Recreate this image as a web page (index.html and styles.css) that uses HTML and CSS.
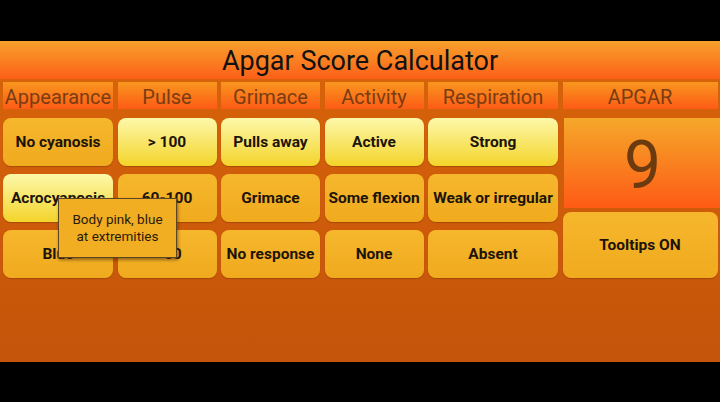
FILE: index.html
```html
<!DOCTYPE html>
<html>
<head>
<meta charset="utf-8">
<link rel="stylesheet" href="styles.css">
</head>
<body>
<div class="app">
  <div class="title">Apgar Score Calculator</div>
  <div class="grid">
    <div class="hdr">Appearance</div>
    <div class="hdr">Pulse</div>
    <div class="hdr">Grimace</div>
    <div class="hdr">Activity</div>
    <div class="hdr">Respiration</div>
    <div class="hdr">APGAR</div>

    <div class="btn">No cyanosis</div>
    <div class="btn sel">&gt; 100</div>
    <div class="btn sel">Pulls away</div>
    <div class="btn sel">Active</div>
    <div class="btn sel">Strong</div>
    <div class="side">
      <div class="score">9</div>
      <div class="btn toggle">Tooltips ON</div>
    </div>

    <div class="btn sel">Acrocyanosis</div>
    <div class="btn">60-100</div>
    <div class="btn">Grimace</div>
    <div class="btn">Some flexion</div>
    <div class="btn">Weak or irregular</div>

    <div class="btn">Blue</div>
    <div class="btn">&lt; 60</div>
    <div class="btn">No response</div>
    <div class="btn">None</div>
    <div class="btn">Absent</div>
  </div>
  <div class="tooltip">Body pink, blue<br>at extremities</div>
</div>
</body>
</html>
```
FILE: styles.css
```css
html, body {
  margin: 0;
  padding: 0;
  background: #000;
  width: 720px;
  height: 402px;
  overflow: hidden;
  font-family: Roboto, "Liberation Sans", sans-serif;
}
.app {
  position: relative;
  margin-top: 41px;
  height: 321px;
  background: linear-gradient(#d9640a, #c4540a);
}
.title {
  height: 38px;
  line-height: 40px;
  text-align: center;
  font-size: 27px;
  color: #111;
  background: linear-gradient(#f6a02c 0%, #fb7a20 60%, #fd5e18 100%);
}
.grid {
  display: grid;
  grid-template-columns: 110px 99px 99px 99px 130px 155px;
  grid-template-rows: 28px 48px 48px 48px;
  column-gap: 4.5px;
  row-gap: 8px;
  padding: 3px 0 0 3px;
}
.hdr {
  display: flex;
  align-items: center;
  justify-content: center;
  padding-top: 2px;
  font-size: 20px;
  color: #7a3c12;
  background: linear-gradient(#f8961f, #fe5b15);
  margin-bottom: 1px;
}
.btn {
  display: flex;
  align-items: center;
  justify-content: center;
  border-radius: 8px;
  font-size: 15.5px;
  font-weight: bold;
  color: #1c1408;
  background: linear-gradient(#f6b72d, #f0aa1e);
  box-shadow: 0 1px 1px rgba(120, 50, 0, 0.45);
  white-space: nowrap;
}
.sel {
  background: linear-gradient(#fdf8aa, #f3d42a);
}
.side {
  grid-row: 2 / span 3;
  grid-column: 6;
  display: flex;
  flex-direction: column;
  gap: 4px;
}
.score {
  height: 90px;
  margin-left: 1px;
  margin-right: -4px;
  display: flex;
  align-items: center;
  justify-content: center;
  font-size: 66px;
  padding-top: 4px;
  box-sizing: border-box;
  color: #6b3a0e;
  background: linear-gradient(#f5a82a, #fe5a15);
}
.toggle {
  flex: 1;
}
.tooltip {
  position: absolute;
  left: 58px;
  top: 157px;
  width: 119px;
  height: 60px;
  box-sizing: border-box;
  border: 1px solid #5c4524;
  background: #f2ae23;
  box-shadow: 1px 2px 3px rgba(60, 30, 0, 0.5);
  display: flex;
  align-items: center;
  justify-content: center;
  text-align: center;
  font-size: 13.5px;
  line-height: 17px;
  color: #2a1a08;
}
```
